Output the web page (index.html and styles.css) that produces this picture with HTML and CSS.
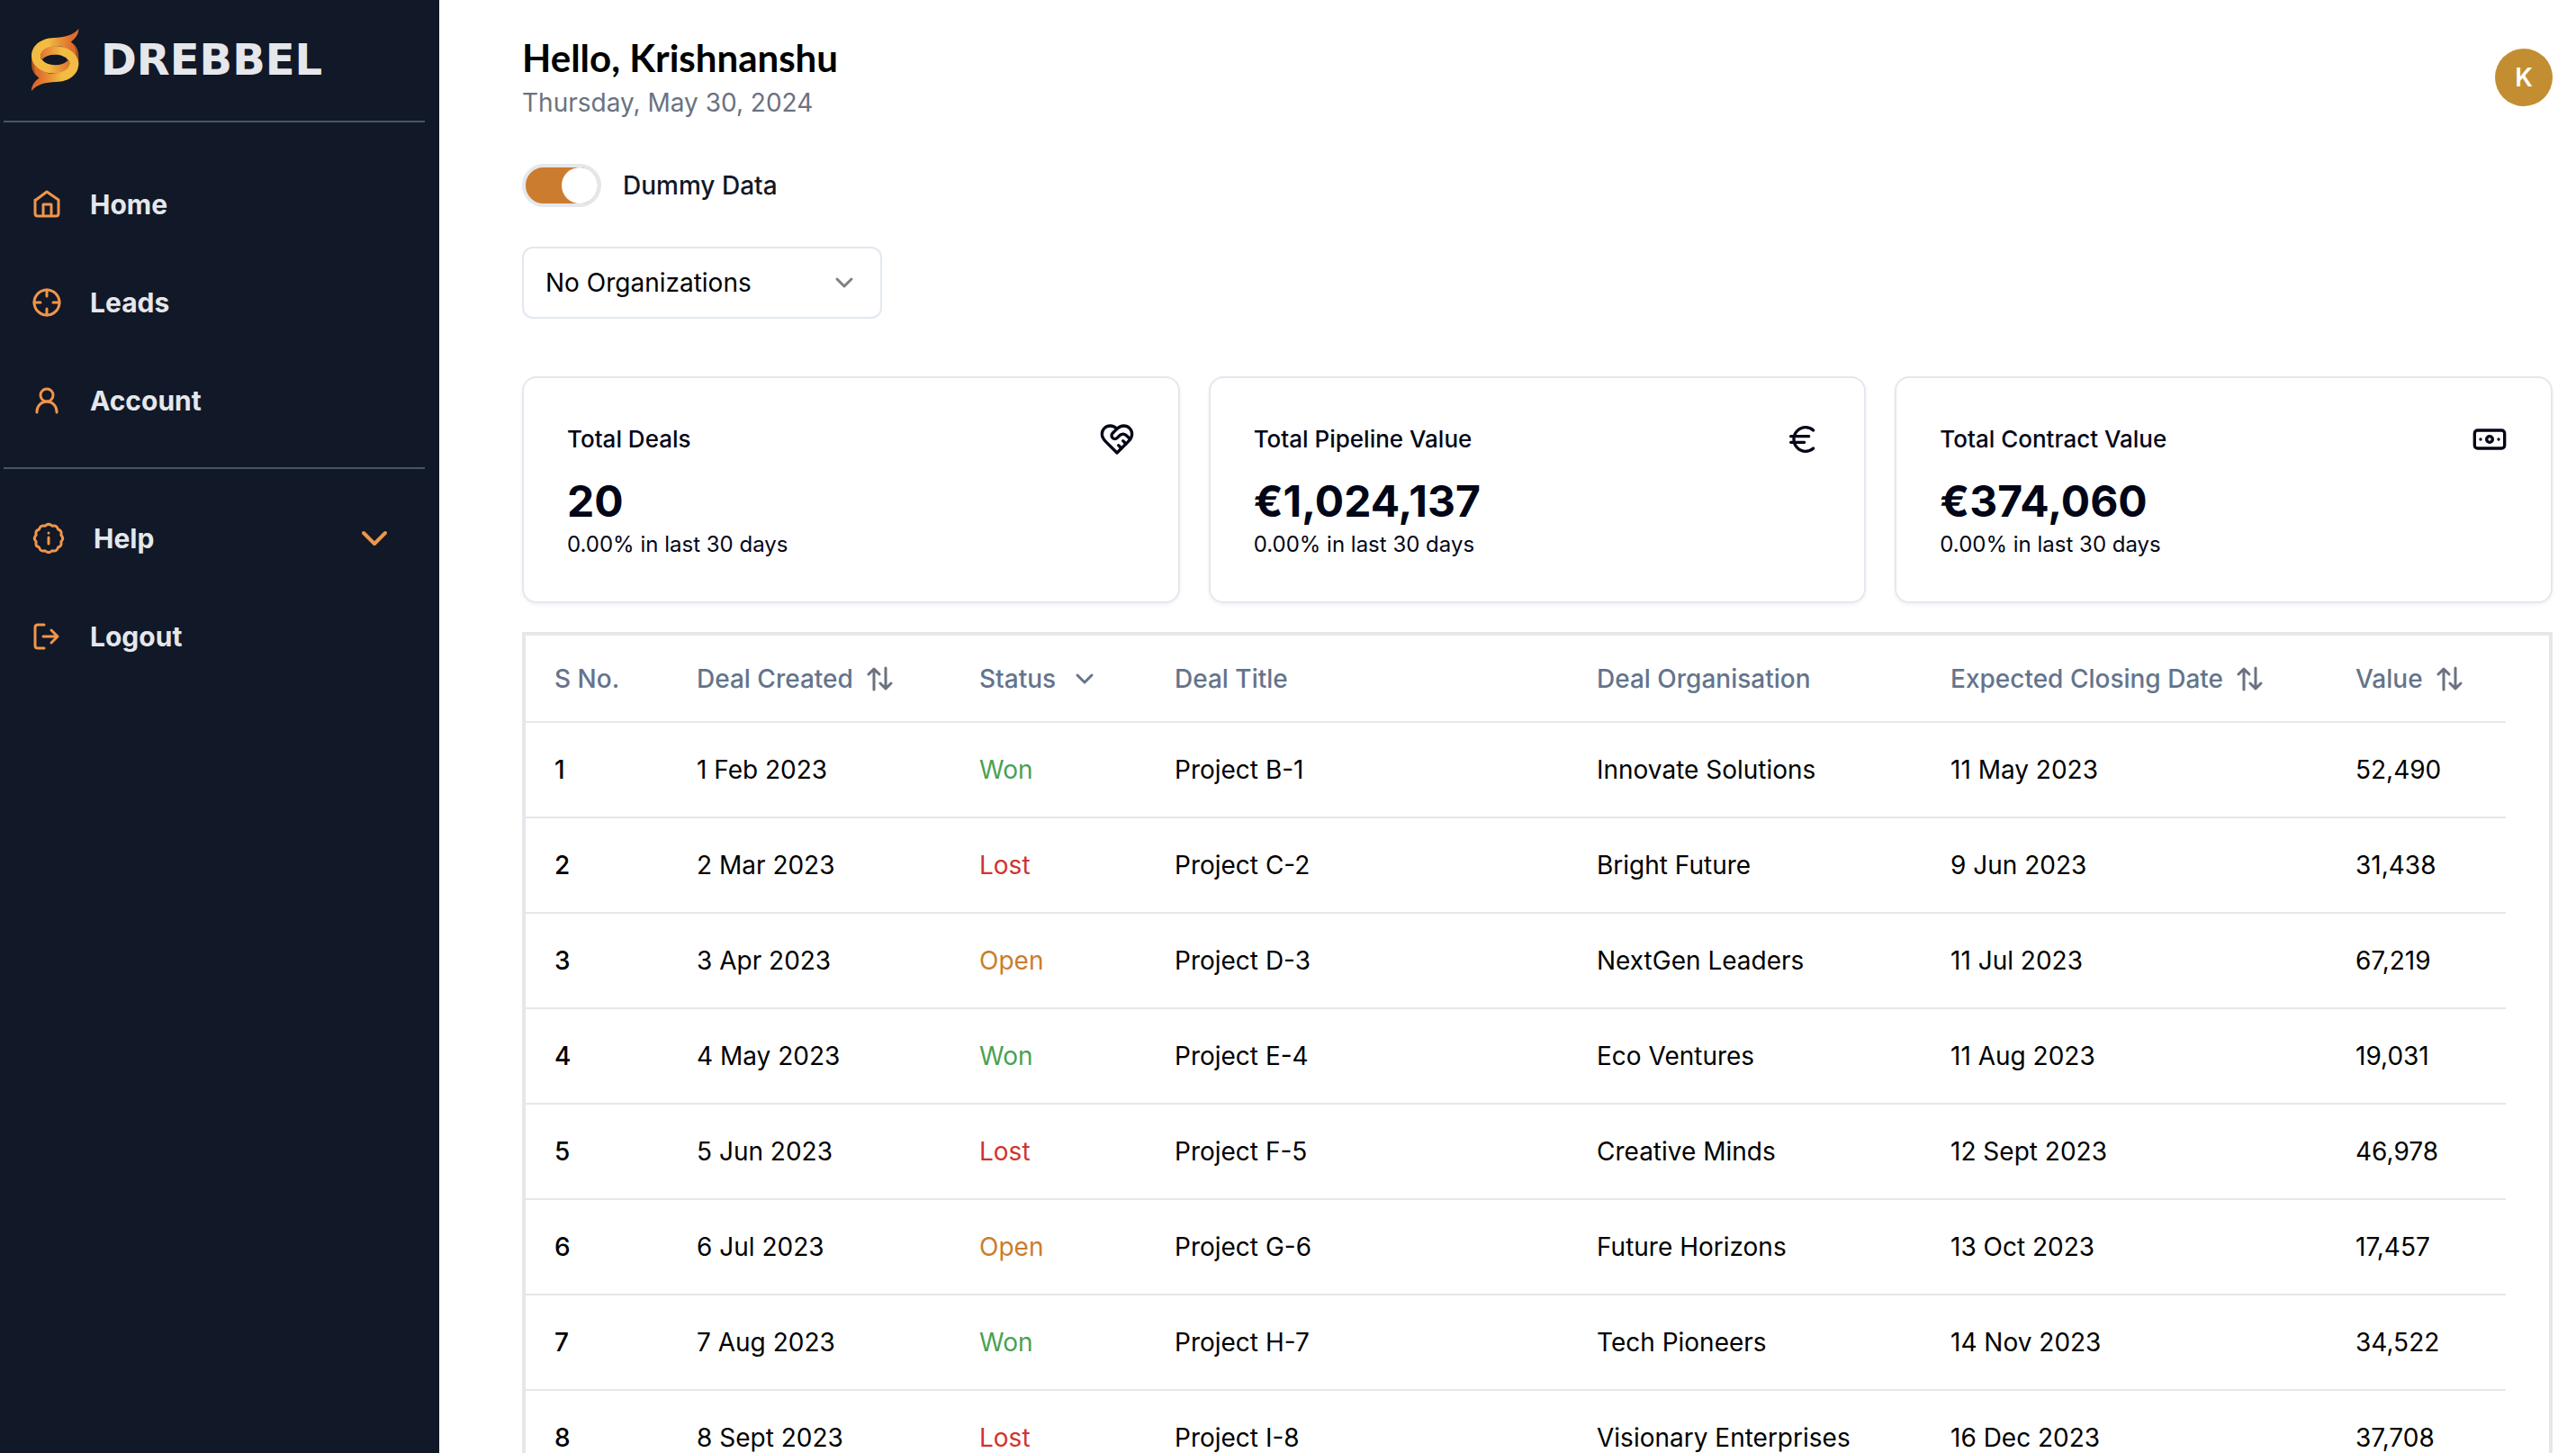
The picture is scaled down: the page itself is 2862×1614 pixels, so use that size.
FILE: index.html
```html
<!DOCTYPE html>
<html lang="en">
<head>
<meta charset="utf-8">
<meta name="viewport" content="width=device-width, initial-scale=1">
<title>Drebbel – Dashboard</title>
<link rel="stylesheet" href="styles.css">
</head>
<body>
<svg class="sprite" aria-hidden="true">
  <symbol id="sort" viewBox="0 0 32 32"><path d="M9 28V5M3 11l6-6 6 6M22 4v23M16 21l6 6 6-6"/></symbol>
  <symbol id="chevron" viewBox="0 0 24 24"><path d="M4 8l8 8 8-8"/></symbol>
</svg>
<div class="app">
  <aside class="sidebar">
    <a class="brand" href="#">
      <svg class="brand-mark" viewBox="0 0 160 208" aria-hidden="true">
        <defs>
          <linearGradient id="flame" gradientUnits="userSpaceOnUse" x1="0" y1="0" x2="158" y2="0">
            <stop offset="0.36" stop-color="#f2bb42"/>
            <stop offset="0.85" stop-color="#de6c2c"/>
          </linearGradient>
          <linearGradient id="shade" gradientUnits="userSpaceOnUse" x1="125" y1="0" x2="158" y2="0">
            <stop offset="0" stop-color="#de6c2c"/>
            <stop offset="1" stop-color="#9c5020"/>
          </linearGradient>
          <path id="fold" fill="url(#shade)" d="M132 44C150 55 158 70 158 92V118C152 92 135 70 100 60Z"/>
          <path id="ribbon" fill="url(#flame)" d="M158 0C140 22 110 29 75 30C30 32 0 56 0 92C2 126 35 150 80 150C108 149 126 137 128 116C128 110 125 107 121 106C112 116 98 121 79 121C60 121 45 115 37 105C32 101 30 97 30 92C32 70 58 58 90 58C115 60 135 68 148 86C148 66 142 52 132 44C148 32 158 18 158 0Z"/>
        </defs>
        <use href="#fold"/><use href="#fold" transform="rotate(180 79 104)"/>
        <use href="#ribbon"/><use href="#ribbon" transform="rotate(180 79 104)"/>
      </svg>
      <span class="brand-name">DREBBEL</span>
    </a>
    <nav class="nav" aria-label="Main">
      <a class="nav-item" href="#">
        <svg class="nav-icon" viewBox="0 0 36 36"><path d="M6 13 18 4l13 9v15q0 3-3 3H8q-3 0-3-3V13ZM14 31V18h9v13"/></svg>
        <span>Home</span>
      </a>
      <a class="nav-item" href="#">
        <svg class="nav-icon" viewBox="0 0 36 36"><circle cx="18" cy="18" r="14"/><path d="M18 4v7M18 25v7M4 18h7M25 18h7"/></svg>
        <span>Leads</span>
      </a>
      <a class="nav-item" href="#">
        <svg class="nav-icon" viewBox="0 0 36 36"><circle cx="18" cy="12" r="7"/><path d="M7 31v-1a11 11 0 0 1 22 0v1"/></svg>
        <span>Account</span>
      </a>
    </nav>
    <div class="nav nav-secondary">
      <button class="nav-item" type="button" aria-expanded="false">
        <svg class="nav-icon nav-icon-large" viewBox="0 0 40 40"><path d="M16.100 6.200 Q20 2.400 23.900 6.200 Q29.200 4.800 30.500 10 Q35.200 11.400 33.800 16.100 Q37.600 20 33.800 23.900 Q35.200 28.600 30.500 30 Q29.200 35.200 23.900 33.800 Q20 37.600 16.100 33.800 Q10.800 35.200 9.500 30 Q4.800 28.600 6.200 23.900 Q2.400 20 6.200 16.100 Q4.800 11.400 9.500 10 Q10.800 4.800 16.100 6.200ZM20 19v7M20 14v.1"/></svg>
        <span>Help</span>
        <svg class="nav-chevron" viewBox="0 0 36 36"><path d="M6 12l12 12 12-12"/></svg>
      </button>
      <a class="nav-item" href="#">
        <svg class="nav-icon" viewBox="0 0 36 36"><path d="M15 5H8q-3 0-3 3v20q0 3 3 3h7M14 18h16M23 11l7 7-7 7"/></svg>
        <span>Logout</span>
      </a>
    </div>
  </aside>

  <main class="main">
    <header class="header">
      <div>
        <h1 class="greeting">Hello, Krishnanshu</h1>
        <p class="date">Thursday, May 30, 2024</p>
      </div>
      <button class="avatar" type="button" aria-label="Account menu">K</button>
    </header>

    <div class="toggle-row">
      <input class="toggle" type="checkbox" id="dummy" role="switch" checked>
      <label for="dummy">Dummy Data</label>
    </div>

    <div class="select-wrap">
      <select class="select" aria-label="Organization"><option>No Organizations</option></select>
      <svg class="select-chevron"><use href="#chevron"/></svg>
    </div>

    <section class="cards">
      <article class="card">
        <div class="card-head"><h2>Total Deals</h2>
          <svg class="card-icon" viewBox="0 0 24 24"><path d="M19 14c1.49-1.46 3-3.21 3-5.5A5.5 5.5 0 0 0 16.500 3c-1.760 0-3 .5-4.500 2-1.500-1.500-2.740-2-4.500-2A5.500 5.500 0 0 0 2 8.500c0 2.300 1.500 4.050 3 5.500l7 7Z"/><path d="M12 5 9.040 7.960a2.170 2.170 0 0 0 0 3.080c.82.82 2.130.85 3 .07l2.070-1.900a2.820 2.820 0 0 1 3.790 0l2.960 2.660M18 15l-2-2M15 18l-2-2"/></svg>
        </div>
        <p class="card-value">20</p>
        <p class="card-note">0.00% in last 30 days</p>
      </article>
      <article class="card">
        <div class="card-head"><h2>Total Pipeline Value</h2>
          <svg class="card-icon" viewBox="0 0 24 24"><path d="M4 10h12M4 14h9M19 6a7.700 7.700 0 0 0-5.200-2A7.900 7.900 0 0 0 6 12c0 4.400 3.500 8 7.800 8 2 0 3.800-.8 5.200-2"/></svg>
        </div>
        <p class="card-value">€1,024,137</p>
        <p class="card-note">0.00% in last 30 days</p>
      </article>
      <article class="card">
        <div class="card-head"><h2>Total Contract Value</h2>
          <svg class="card-icon" viewBox="0 0 24 24"><rect x="2" y="6" width="20" height="12" rx="2"/><circle cx="12" cy="12" r="2"/><path d="M6 12h.01M18 12h.01"/></svg>
        </div>
        <p class="card-value">€374,060</p>
        <p class="card-note">0.00% in last 30 days</p>
      </article>
    </section>

    <div class="table-wrap">
      <table class="deals">
        <colgroup><col class="c-no"><col class="c-created"><col class="c-status"><col><col class="c-org"><col class="c-closing"><col class="c-value"></colgroup>
        <thead>
          <tr>
            <th scope="col">S No.</th>
            <th scope="col"><button class="sort" type="button">Deal Created<svg class="sort-icon"><use href="#sort"/></svg></button></th>
            <th scope="col"><button class="sort" type="button">Status<svg class="filter-icon"><use href="#chevron"/></svg></button></th>
            <th scope="col">Deal Title</th>
            <th scope="col">Deal Organisation</th>
            <th scope="col"><button class="sort" type="button">Expected Closing Date<svg class="sort-icon"><use href="#sort"/></svg></button></th>
            <th scope="col"><button class="sort" type="button">Value<svg class="sort-icon"><use href="#sort"/></svg></button></th>
          </tr>
        </thead>
        <tbody>
          <tr><td>1</td><td>1 Feb 2023</td><td class="won">Won</td><td>Project B-1</td><td>Innovate Solutions</td><td>11 May 2023</td><td>52,490</td></tr>
          <tr><td>2</td><td>2 Mar 2023</td><td class="lost">Lost</td><td>Project C-2</td><td>Bright Future</td><td>9 Jun 2023</td><td>31,438</td></tr>
          <tr><td>3</td><td>3 Apr 2023</td><td class="open">Open</td><td>Project D-3</td><td>NextGen Leaders</td><td>11 Jul 2023</td><td>67,219</td></tr>
          <tr><td>4</td><td>4 May 2023</td><td class="won">Won</td><td>Project E-4</td><td>Eco Ventures</td><td>11 Aug 2023</td><td>19,031</td></tr>
          <tr><td>5</td><td>5 Jun 2023</td><td class="lost">Lost</td><td>Project F-5</td><td>Creative Minds</td><td>12 Sept 2023</td><td>46,978</td></tr>
          <tr><td>6</td><td>6 Jul 2023</td><td class="open">Open</td><td>Project G-6</td><td>Future Horizons</td><td>13 Oct 2023</td><td>17,457</td></tr>
          <tr><td>7</td><td>7 Aug 2023</td><td class="won">Won</td><td>Project H-7</td><td>Tech Pioneers</td><td>14 Nov 2023</td><td>34,522</td></tr>
          <tr><td>8</td><td>8 Sept 2023</td><td class="lost">Lost</td><td>Project I-8</td><td>Visionary Enterprises</td><td>16 Dec 2023</td><td>37,708</td></tr>
        </tbody>
      </table>
    </div>
  </main>
</div>
</body>
</html>
```
FILE: styles.css
```css
*, *::before, *::after { box-sizing: border-box; }

body {
  margin: 0;
  font-family: Inter, "Liberation Sans", sans-serif;
  font-size: 28px;
  line-height: 40px;
  color: #000;
  background: #fff;
}

h1, h2, p { margin: 0; }
button, select { font: inherit; color: inherit; }
button { padding: 0; border: 0; background: none; cursor: pointer; }
a { color: inherit; text-decoration: none; }

svg {
  flex: none;
  fill: none;
  stroke-linecap: round;
  stroke-linejoin: round;
}

.sprite { display: none; }

.app { display: flex; height: 100vh; }

/* Sidebar */
.sidebar {
  flex: none;
  width: 488px;
  padding: 0 16px 0 4px;
  background: #111827;
  color: #e5e7eb;
}

.brand {
  display: flex;
  align-items: center;
  gap: 24px;
  height: 136px;
  padding: 0 0 2px 31px;
  border-bottom: 2px solid #4b5563;
}
.brand-mark { width: 53px; height: 69px; stroke: none; }
.brand-name {
  font-family: "DejaVu Sans", sans-serif;
  font-size: 48px;
  font-weight: 700;
}

.nav {
  display: flex;
  flex-direction: column;
  padding: 36px 0 20px;
}
.nav-secondary {
  padding-top: 22px;
  border-top: 2px solid #4b5563;
}
.nav-item {
  display: flex;
  align-items: center;
  gap: 30px;
  height: 109px;
  padding: 0 38px 0 30px;
  font-size: 30px;
  font-weight: 700;
  text-align: left;
}
.nav-icon {
  width: 36px;
  height: 36px;
  stroke: #f0954a;
  stroke-width: 3;
}
.nav-icon-large { width: 40px; height: 40px; }
.nav-chevron {
  width: 36px;
  height: 36px;
  margin-left: auto;
  stroke: #f0954a;
  stroke-width: 4;
}

/* Main column */
.main {
  flex: 1;
  min-width: 0;
  padding: 36px 26px 32px 92px;
  overflow: auto;
  scrollbar-width: none;
}

.header {
  display: flex;
  justify-content: space-between;
  align-items: center;
}
.greeting {
  font-family: Lato, sans-serif;
  font-size: 42px;
  line-height: 56px;
  font-weight: 700;
}
.date { line-height: 44px; color: #6b7280; }
.avatar {
  width: 64px;
  height: 64px;
  border-radius: 50%;
  background: #c28e31;
  color: #fff;
  font-weight: 600;
}

.toggle-row {
  display: flex;
  align-items: center;
  gap: 24px;
  margin-top: 46px;
  color: #111827;
  font-weight: 500;
}
.toggle {
  appearance: none;
  display: flex;
  justify-content: flex-end;
  width: 88px;
  height: 48px;
  margin: 0;
  border: 4px solid #e5e7eb;
  border-radius: 24px;
  background: #cb7c2e;
}
.toggle::before {
  content: "";
  width: 40px;
  height: 40px;
  border-radius: 50%;
  background: #fff;
}
.toggle:not(:checked) { justify-content: flex-start; background: #e5e7eb; }

.select-wrap {
  display: grid;
  align-items: center;
  width: 400px;
  margin-top: 44px;
}
.select, .select-chevron { grid-area: 1 / 1; }
.select {
  appearance: none;
  width: 100%;
  height: 80px;
  padding: 0 24px;
  border: 2px solid #e2e8f0;
  border-radius: 12px;
  background: #fff;
}
.select-chevron {
  justify-self: end;
  width: 24px;
  height: 24px;
  margin-right: 30px;
  stroke: #808080;
  stroke-width: 3;
  pointer-events: none;
}

/* Summary cards */
.cards {
  display: grid;
  grid-template-columns: repeat(3, 1fr);
  gap: 32px;
  margin-top: 64px;
  color: #020617;
}
.card {
  padding: 48px;
  border: 2px solid #e2e8f0;
  border-radius: 16px;
  box-shadow: 0 2px 4px rgb(0 0 0 / 5%);
}
.card-head {
  display: flex;
  justify-content: space-between;
  align-items: center;
  margin-bottom: 16px;
}
.card-head h2 { font-size: 26px; font-weight: 500; }
.card-icon {
  width: 40px;
  height: 40px;
  stroke: #020617;
  stroke-width: 2;
}
.card-value { font-size: 48px; line-height: 66px; font-weight: 700; }
.card-note { font-size: 24px; line-height: 30px; }

/* Deals table */
.table-wrap {
  margin-top: 32px;
  padding-right: 48px;
  border: 4px solid #e5e7eb;
}
.deals {
  width: 100%;
  table-layout: fixed;
  border-collapse: separate;
  border-spacing: 0;
}
.c-no { width: 158px; }
.c-created { width: 314px; }
.c-status { width: 217px; }
.c-org { width: 393px; }
.c-closing { width: 450px; }
.c-value { width: 199px; }

.deals th, .deals td {
  height: 106px;
  padding: 0 0 0 32px;
  border-bottom: 2px solid #e5e7eb;
  text-align: left;
  white-space: nowrap;
}
.deals th { height: 97px; color: #64748b; font-weight: 500; }
.deals td:first-child { font-weight: 500; }

.sort { display: flex; align-items: center; gap: 14px; }
.sort-icon {
  width: 32px;
  height: 32px;
  stroke: #6b7280;
  stroke-width: 3;
}
.filter-icon {
  width: 24px;
  height: 24px;
  margin-left: 6px;
  stroke: #64748b;
  stroke-width: 3;
}

.won { color: #4aa152; }
.lost { color: #d0342c; }
.open { color: #cb7c2e; }
```
